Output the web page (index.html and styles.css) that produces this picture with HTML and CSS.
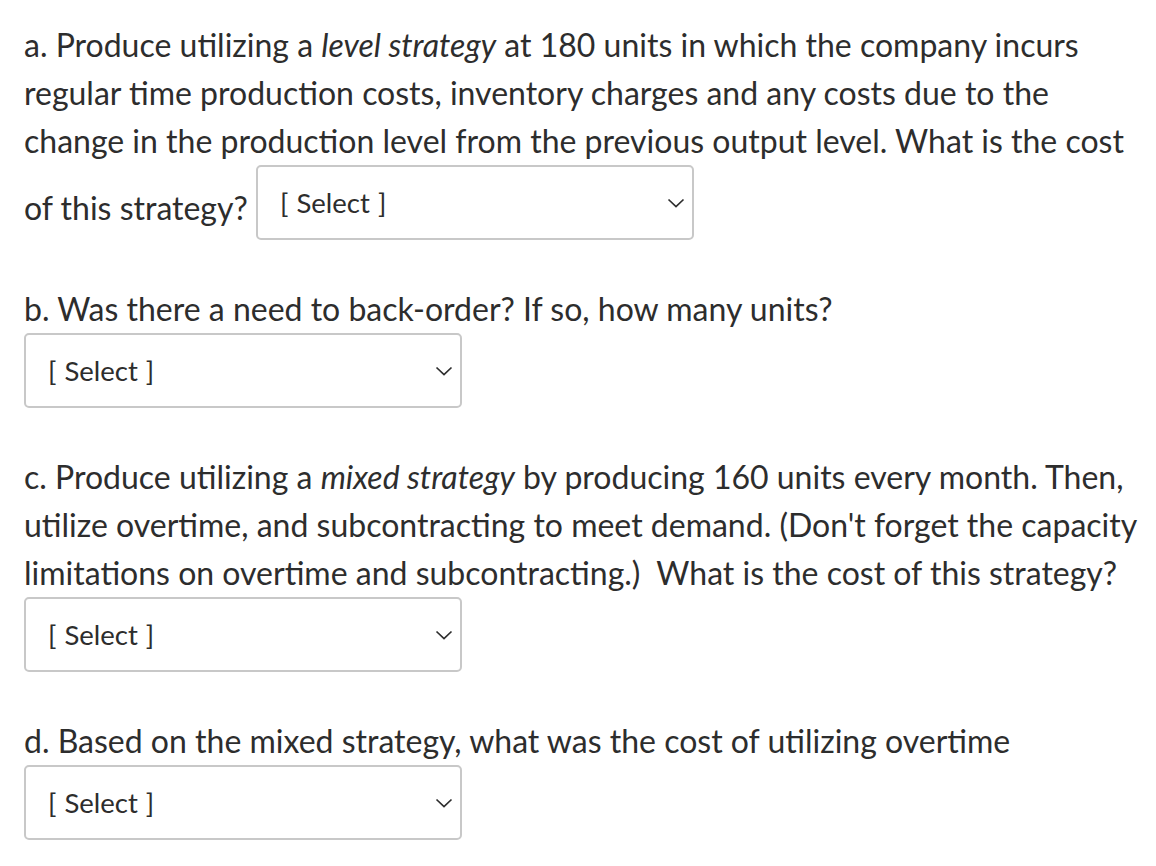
FILE: index.html
```html
<!DOCTYPE html>
<html>
<head>
<meta charset="utf-8">
<link rel="stylesheet" href="styles.css">
</head>
<body>
<div class="quiz">
  <p class="q">a. Produce utilizing a <em>level strategy</em> at 180 units in which the company incurs regular time production costs, inventory charges and any costs due to the change in the production level from the previous output level. What is the cost of this strategy? <span class="select"><span class="label">[ Select ]</span><svg class="chev" width="18" height="10" viewBox="0 0 18 10"><path d="M1.5 1.5 L9 8.5 L16.5 1.5" fill="none" stroke="#2d2d2d" stroke-width="1.7"/></svg></span></p>
  <p class="q">b. Was there a need to back-order? If so, how many units? <span class="select"><span class="label">[ Select ]</span><svg class="chev" width="18" height="10" viewBox="0 0 18 10"><path d="M1.5 1.5 L9 8.5 L16.5 1.5" fill="none" stroke="#2d2d2d" stroke-width="1.7"/></svg></span></p>
  <p class="q">c. Produce utilizing a <em>mixed strategy</em> by producing 160 units every month. Then, utilize overtime, and subcontracting to meet demand. (Don't forget the capacity limitations on overtime and subcontracting.)&nbsp; What is the cost of this strategy? <span class="select"><span class="label">[ Select ]</span><svg class="chev" width="18" height="10" viewBox="0 0 18 10"><path d="M1.5 1.5 L9 8.5 L16.5 1.5" fill="none" stroke="#2d2d2d" stroke-width="1.7"/></svg></span></p>
  <p class="q">d. Based on the mixed strategy, what was the cost of utilizing overtime <span class="select"><span class="label">[ Select ]</span><svg class="chev" width="18" height="10" viewBox="0 0 18 10"><path d="M1.5 1.5 L9 8.5 L16.5 1.5" fill="none" stroke="#2d2d2d" stroke-width="1.7"/></svg></span></p>
</div>
</body>
</html>
```
FILE: styles.css
```css
html, body {
  margin: 0;
  padding: 0;
  background: #ffffff;
}
body {
  font-family: Lato, "Open Sans", sans-serif;
  color: #2d2d2d;
  font-size: 32px;
  line-height: 48px;
}
.quiz {
  padding: 21px 10px 0 24px;
}
.q {
  margin: 0 0 42px 0;
}
em {
  font-style: italic;
}
.select {
  display: inline-flex;
  align-items: center;
  justify-content: space-between;
  box-sizing: border-box;
  width: 438px;
  height: 75px;
  padding: 0 7px 0 22px;
  border: 2px solid #c8c8c8;
  border-radius: 5px;
  background: #fff;
  vertical-align: 7px;
  font-size: 27.5px;
  line-height: 34px;
  margin: 0 0 3px 0;
}
.label {
  word-spacing: 1px;
}
.chev {
  display: block;
}
```
